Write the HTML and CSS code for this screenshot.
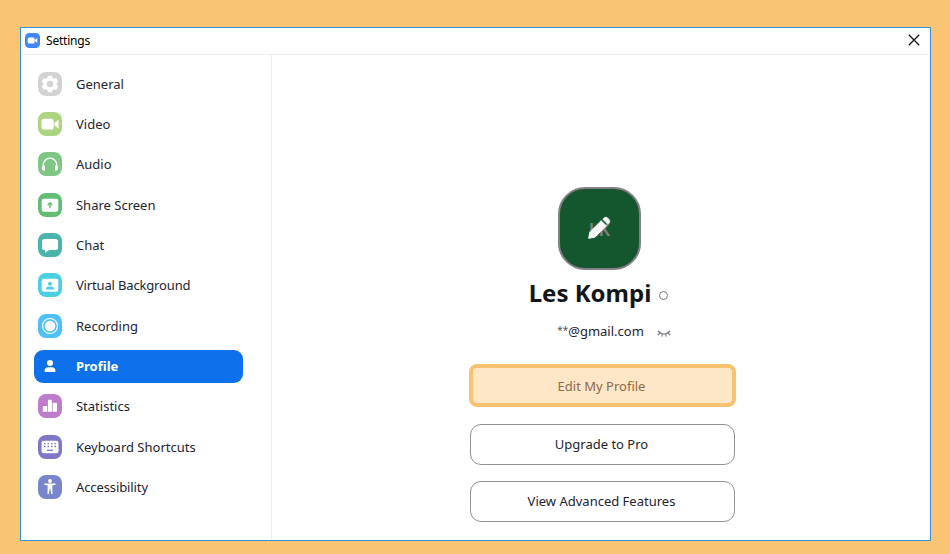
FILE: index.html
```html
<!DOCTYPE html>
<html lang="en">
<head>
<meta charset="utf-8">
<title>Settings</title>
<link rel="stylesheet" href="styles.css">
</head>
<body>
<div class="window">
  <header class="titlebar">
    <svg class="app-icon" viewBox="0 0 15 15"><rect width="15" height="15" rx="4.3" fill="#4087fc"/><rect x="2.7" y="4.5" width="7" height="6" rx="1.5" fill="#fff"/><path d="M10.1 6.8 12.3 5v5l-2.2-1.8z" fill="#fff"/></svg>
    <span class="title">Settings</span>
    <svg class="close" viewBox="0 0 12 12"><path d="M.8.8 11.2 11.2M11.2.8.8 11.2" stroke="#111" stroke-width="1.25"/></svg>
  </header>
  <div class="body">
    <nav class="sidebar">
      <a class="item"><svg class="icon" viewBox="0 0 24 24"><rect width="24" height="24" rx="8" fill="#d2d2d2"/><path d="M10.2 4h3.6l.6 2.2 1.6.9 2.2-.6 1.8 3.1-1.6 1.6v1.6l1.6 1.6-1.8 3.1-2.2-.6-1.6.9-.6 2.2h-3.6l-.6-2.2-1.6-.9-2.2.6L4 14.4l1.6-1.6v-1.6L4 9.6l1.8-3.1 2.2.6 1.6-.9z" fill="#fff" stroke="#fff" stroke-linejoin="round" stroke-width=".6"/><circle cx="12" cy="12" r="3.2" fill="#d2d2d2"/></svg><span>General</span></a>
      <a class="item"><svg class="icon" viewBox="0 0 24 24"><rect width="24" height="24" rx="8" fill="#add581"/><rect x="3.5" y="6.8" width="12.2" height="10.8" rx="2.6" fill="#fff"/><path d="m16.4 11 3.4-2.8q.8-.5.8.4v7.1q0 .9-.8.4l-3.4-2.8z" fill="#fff"/></svg><span>Video</span></a>
      <a class="item"><svg class="icon" viewBox="0 0 24 24"><rect width="24" height="24" rx="8" fill="#80c786"/><path d="M5.2 15.5V13a6.8 6.8 0 0 1 13.6 0v2.5" fill="none" stroke="#fff" stroke-width="1.3"/><path d="M7 13.5v5.2c-4.2.4-4.2-5.4 0-5.2zm10 0v5.2c4.2.4 4.2-5.4 0-5.2z" fill="#fff"/></svg><span>Audio</span></a>
      <a class="item"><svg class="icon" viewBox="0 0 24 24"><rect width="24" height="24" rx="8" fill="#63bd73"/><rect x="3.7" y="5.7" width="16.6" height="13" rx="2.2" fill="#fff"/><path d="M12 15.3v-5M9.7 12 12 9.7l2.3 2.3" fill="none" stroke="#63bd73" stroke-width="1.4"/></svg><span>Share Screen</span></a>
      <a class="item"><svg class="icon" viewBox="0 0 24 24"><rect width="24" height="24" rx="8" fill="#4bb5ad"/><path d="M6.5 6h11a2.5 2.5 0 0 1 2.5 2.5v6a2.5 2.5 0 0 1-2.5 2.5h-6.2l-3.6 2.6q-.6.3-.6-.5V17h-.6A2.5 2.5 0 0 1 4 14.5v-6A2.5 2.5 0 0 1 6.5 6z" fill="#fff"/></svg><span>Chat</span></a>
      <a class="item"><svg class="icon" viewBox="0 0 24 24"><rect width="24" height="24" rx="8" fill="#4bcfe1"/><rect x="3.7" y="5.7" width="16.6" height="13" rx="2.2" fill="#fff"/><circle cx="12" cy="10.7" r="2" fill="#4bcfe1"/><path d="M7.8 16.5q0-3 3-3h2.4q3 0 3 3z" fill="#4bcfe1"/></svg><span class="virtual">Virtual Background</span></a>
      <a class="item"><svg class="icon" viewBox="0 0 24 24"><rect width="24" height="24" rx="8" fill="#50c0f8"/><circle cx="12" cy="12" r="7.5" fill="none" stroke="#fff" stroke-width="1.2"/><circle cx="12" cy="12" r="5.3" fill="#fff"/></svg><span>Recording</span></a>
      <a class="item active"><svg class="icon" viewBox="0 0 24 24"><circle cx="12" cy="8.9" r="3" fill="#fff"/><path d="M7.1 18q-.6 0-.6-.8 0-4 4-4h3q4 0 4 4 0 .8-.6.8z" fill="#fff"/></svg><span>Profile</span></a>
      <a class="item"><svg class="icon" viewBox="0 0 24 24"><rect width="24" height="24" rx="8" fill="#bd7dcb"/><path d="M4.8 17.7v-5q0-.8.8-.8h2.800q.8 0 .8.8v5zm5.1 0V6.600q0-.8.8-.8h2.400q.8 0 .8.8v11.100zm4.700 0V9.600q0-.8.8-.8h2.800q.8 0 .8.8v8.100z" fill="#fff"/></svg><span>Statistics</span></a>
      <a class="item"><svg class="icon" viewBox="0 0 24 24"><rect width="24" height="24" rx="8" fill="#8076c6"/><rect x="3.5" y="5.7" width="17" height="12.6" rx="2.2" fill="#fff"/><path d="M6 8.7h12.5M6 11.5h12.5" stroke="#8076c6" stroke-width="1.3" stroke-dasharray="1.5 2"/><path d="M9 15.300h6" stroke="#8076c6" stroke-width="1.3"/></svg><span>Keyboard Shortcuts</span></a>
      <a class="item"><svg class="icon" viewBox="0 0 24 24"><rect width="24" height="24" rx="8" fill="#7986cb"/><circle cx="12" cy="6" r="1.9" fill="#fff"/><path d="M6.5 8.6h11q.8.6 0 1.2l-3.2.7.2 8.3q-.7.8-1.4 0L12.4 14h-.8l-.7 4.8q-.7.8-1.4 0l.2-8.3-3.2-.7q-.8-.6 0-1.2z" fill="#fff"/></svg><span class="access">Accessibility</span></a>
    </nav>
    <main class="content">
      <div class="avatar"><span class="initials">LK</span>
        <svg class="pencil" viewBox="0 0 26 26"><path d="M1.700 24.300 3 17.600 14.700 5.900l5.400 5.400L8.400 23z" fill="#f7f7f7" stroke="#f7f7f7" stroke-linejoin="round"/><path d="m16.400 4.400 1.700-1.700q1.700-1.300 3.400.4l1.500 1.500q1.600 1.700.3 3.400l-1.700 1.700z" fill="#f7f7f7" stroke="#f7f7f7" stroke-width=".6"/></svg>
      </div>
      <div class="name-row"><h1 class="name">Les Kompi</h1><i class="status"></i></div>
      <div class="mail-row"><span class="mail"><span class="mask">**</span>@gmail.com</span><svg class="eye" viewBox="0 0 14 8"><path d="M1 1q6 6 12 0M2.900 3 1 5M11.100 3 13 5M5.400 4 4.700 6.500M8.600 4l.7 2.500" fill="none" stroke="#77777f" stroke-width="1.100"/></svg></div>
      <div class="actions">
        <button class="button highlighted">Edit My Profile</button>
        <button class="button">Upgrade to Pro</button>
        <button class="button">View Advanced Features</button>
      </div>
    </main>
  </div>
</div>
</body>
</html>
```
FILE: styles.css
```css
* { box-sizing: border-box; }
body {
  margin: 0;
  height: 554px;
  padding: 27px 19px 13px 20px;
  background: #f9c474;
  font-family: "Noto Sans", "Open Sans", sans-serif;
  font-size: 13px;
  color: #232333;
  overflow: hidden;
}
.window {
  width: 911px;
  height: 514px;
  border: 1px solid #3491dc;
  background: #fff;
  display: flex;
  flex-direction: column;
}
.titlebar {
  height: 26px;
  flex: none;
  display: flex;
  align-items: center;
  padding: 0 10px 2px 4px;
  color: #000;
  font-size: 12px;
}
.title { letter-spacing: -.2px; }
.app-icon { width: 15px; height: 15px; margin-right: 6px; }
.close { width: 12px; height: 12px; margin-left: auto; }
.body {
  flex: 1;
  display: flex;
  margin: 0 2px;
  border-top: 1px solid #eeeef1;
}
.sidebar {
  width: 249px;
  border-right: 1px solid #ededf0;
  padding: 12.4px 0 0 10.6px;
  display: flex;
  flex-direction: column;
  gap: 7.33px;
}
.item {
  width: 209px;
  height: 33px;
  flex: none;
  border-radius: 9px;
  display: flex;
  align-items: center;
  padding: 0 0 .4px 4.4px;
  white-space: nowrap;
}
.icon { width: 24px; height: 24px; margin-right: 14px; }
.virtual { letter-spacing: -.16px; }
.access { letter-spacing: -.1px; }
.active { background: #0e71eb; color: #fff; font-weight: 700; }
.content {
  flex: 1;
  display: flex;
  flex-direction: column;
  align-items: center;
  padding: 132px 0 0 5px;
}
.avatar {
  width: 83px;
  height: 83px;
  margin-right: 6px;
  border: 2px solid #858085;
  border-radius: 27px;
  background: #14572f;
  display: grid;
  place-items: center;
}
.avatar > * { grid-area: 1 / 1; }
.initials { color: #858085; font-size: 18px; line-height: 20px; font-weight: 600; }
.pencil { width: 25px; height: 25px; margin-bottom: 3px; }
.name-row {
  height: 46px;
  display: flex;
  align-items: center;
  gap: 8px;
  margin-right: 8px;
}
.name { margin: 0; font-size: 24px; line-height: 32px; font-weight: 700; color: #131619; white-space: nowrap; }
.status { width: 9px; height: 9px; border: 1.5px solid #77777f; border-radius: 50%; margin-top: 5px; }
.mail-row {
  height: 30px;
  display: flex;
  align-items: center;
  gap: 13px;
  margin-left: 23px;
}
.mask { font-size: 10px; line-height: 1; vertical-align: 2px; color: #55555f; }
.eye { width: 14px; height: 8px; margin-top: 5px; }
.actions { display: flex; flex-direction: column; align-items: center; gap: 17px; margin-top: 19px; }
.button {
  width: 265px;
  height: 41px;
  padding: 0 2px 1px 0;
  border: 1px solid #929296;
  border-radius: 11px;
  background: #fff;
  color: #232333;
  font: inherit;
  white-space: nowrap;
}
.highlighted {
  width: 267px;
  height: 43px;
  margin: -1px 0 0;
  padding-bottom: 0;
  border: 4px solid #f9c270;
  border-radius: 8px;
  background: #fee7c7;
  color: #8d6a4b;
}
.button + .button { margin-top: -.4px; }
```
